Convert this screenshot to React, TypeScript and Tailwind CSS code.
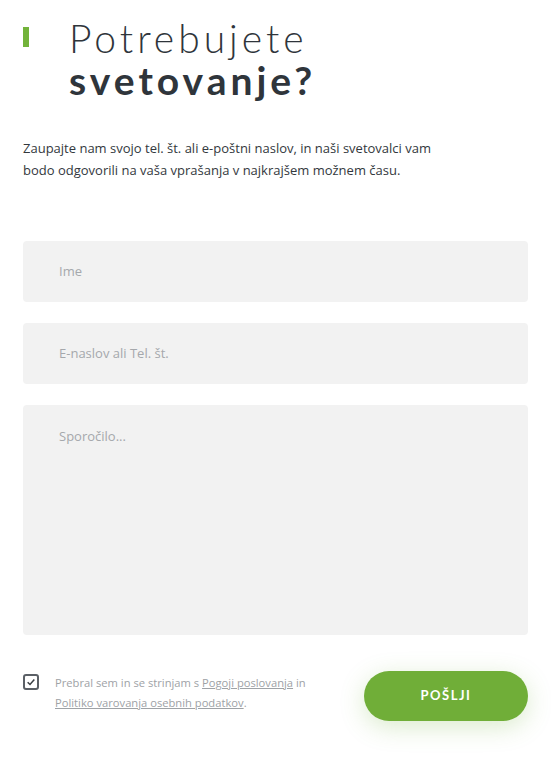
const Field = ({ label }: { label: string }) => (
  <div className="w-full h-[61px] rounded bg-[#f2f2f2] flex items-center px-[36px] text-[13px] text-[#a5a8ac]">
    {label}
  </div>
);

export default function App() {
  return (
    <div className="w-[551px] h-[766px] bg-white font-['Open_Sans',sans-serif] text-[#2f353b] overflow-hidden">
      <div className="flex pt-[17px] pl-[23px]">
        <div className="w-[6px] h-[20px] bg-[#72b33a] mt-[10px]" />
        <h1 className="ml-[40px] font-['Lato',sans-serif] text-[39px] leading-[42px] tracking-[4px]">
          <span className="block font-light">Potrebujete</span>
          <span className="block font-bold">svetovanje?</span>
        </h1>
      </div>

      <p className="mt-[36px] mx-[23px] w-[440px] text-[13px] leading-[22px] text-[#33383d]">
        Zaupajte nam svojo tel. št. ali e-poštni naslov, in naši svetovalci vam bodo odgovorili na vaša vprašanja v najkrajšem možnem času.
      </p>

      <form className="mt-[60px] mx-[23px] flex flex-col gap-[21px]">
        <Field label="Ime" />
        <Field label="E-naslov ali Tel. št." />
        <div className="w-full h-[230px] rounded bg-[#f2f2f2] px-[36px] pt-[22px] text-[13px] text-[#a5a8ac]">
          Sporočilo...
        </div>
      </form>

      <div className="mt-[36px] mx-[23px] flex items-start justify-between">
        <div className="flex items-start gap-[16px] pt-[2px]">
          <div className="w-[16px] h-[16px] mt-[1px] border-2 border-[#5b6066] rounded-[3px] flex items-center justify-center">
            <svg viewBox="0 0 12 12" className="w-[10px] h-[10px]" fill="none" stroke="#3a3f44" strokeWidth="1.8">
              <path d="M2 6.2 L4.8 9 L10 3" />
            </svg>
          </div>
          <p className="text-[11.2px] leading-[20px] text-[#9ea2a6]">
            Prebral sem in se strinjam s <span className="underline">Pogoji poslovanja</span> in
            <br />
            <span className="underline">Politiko varovanja osebnih podatkov</span>.
          </p>
        </div>
        <button className="w-[164px] h-[50px] rounded-full bg-[#70ae38] text-white text-[13px] font-bold tracking-[1.5px] font-['Lato',sans-serif] shadow-[0_6px_24px_rgba(112,174,56,0.25)]">
          POŠLJI
        </button>
      </div>
    </div>
  );
}
